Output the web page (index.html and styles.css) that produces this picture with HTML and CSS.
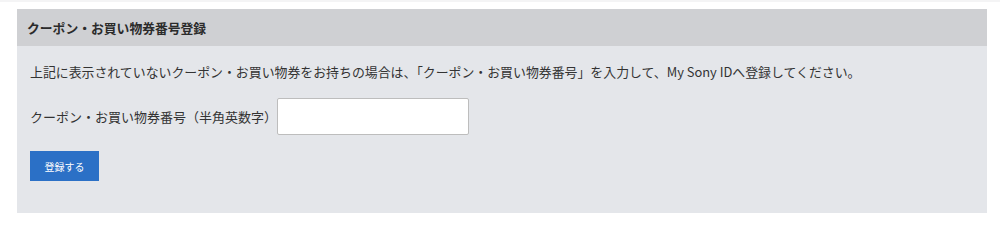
FILE: index.html
```html
<!DOCTYPE html>
<html lang="ja">
<head>
<meta charset="utf-8">
<link rel="stylesheet" href="styles.css">
</head>
<body>
<div class="topline"></div>
<section class="panel">
  <h2 class="panel-head">クーポン・お買い物券番号登録</h2>
  <div class="panel-body">
    <p class="lead">上記に表示されていないクーポン・お買い物券をお持ちの場合は、「クーポン・お買い物券番号」を入力して、My Sony IDへ登録してください。</p>
    <div class="row">
      <label class="label" for="code">クーポン・お買い物券番号（半角英数字）</label>
      <input class="input" id="code" type="text">
    </div>
    <button class="btn" type="button">登録する</button>
  </div>
</section>
</body>
</html>
```

FILE: styles.css
```css
html, body {
  margin: 0;
  padding: 0;
  background: #ffffff;
  font-family: "Noto Sans CJK JP", "Noto Sans", sans-serif;
  color: #333333;
}
.topline {
  height: 2px;
  background: #f4f4f5;
}
.panel {
  margin: 7px 13px 0 17px;
  background: #e4e6ea;
}
.panel-head {
  margin: 0;
  height: 37px;
  line-height: 37px;
  padding-left: 10px;
  background: #cfd0d3;
  font-size: 12.8px;
  font-weight: bold;
  color: #2b2b2b;
}
.panel-body {
  padding: 16px 13px 32px;
}
.lead {
  margin: 0;
  font-size: 12.9px;
  line-height: 20px;
}
.row {
  display: flex;
  align-items: center;
  margin-top: 16px;
}
.label {
  font-size: 13px;
  line-height: 20px;
  width: 247px;
  white-space: nowrap;
}
.input {
  box-sizing: border-box;
  width: 192px;
  height: 37px;
  margin: 0;
  border: 1px solid #bdbdbd;
  border-radius: 2px;
  background: #ffffff;
}
.btn {
  display: block;
  margin-top: 16px;
  width: 69px;
  height: 30px;
  border: none;
  border-radius: 0;
  background: #2b70c6;
  color: #ffffff;
  font-family: "Noto Sans CJK JP", "Noto Sans", sans-serif;
  font-size: 10px;
  padding: 0;
}
```
